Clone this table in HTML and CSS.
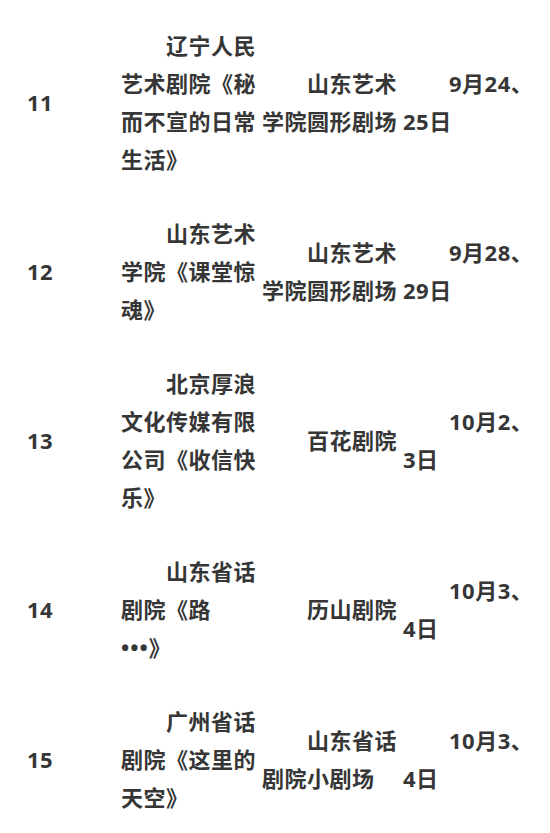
FILE: index.html
```html
<!DOCTYPE html>
<html lang="zh-CN">
<head>
<meta charset="utf-8">
<link rel="stylesheet" href="styles.css">
</head>
<body>
<table class="schedule">
  <tbody>
    <tr class="tall">
      <td class="num">11</td>
      <td class="title">辽宁人民<br>艺术剧院《秘<br>而不宣的日常<br>生活》</td>
      <td class="venue">山东艺术<br>学院圆形剧场</td>
      <td class="date">9月24、<br>25日</td>
    </tr>
    <tr class="short">
      <td class="num">12</td>
      <td class="title">山东艺术<br>学院《课堂惊<br>魂》</td>
      <td class="venue">山东艺术<br>学院圆形剧场</td>
      <td class="date">9月28、<br>29日</td>
    </tr>
    <tr class="tall">
      <td class="num">13</td>
      <td class="title">北京厚浪<br>文化传媒有限<br>公司《收信快<br>乐》</td>
      <td class="venue">百花剧院</td>
      <td class="date">10月2、<br>3日</td>
    </tr>
    <tr class="short">
      <td class="num">14</td>
      <td class="title">山东省话<br>剧院《路<br><span class="dots">•••</span>》</td>
      <td class="venue">历山剧院</td>
      <td class="date">10月3、<br>4日</td>
    </tr>
    <tr class="short">
      <td class="num">15</td>
      <td class="title">广州省话<br>剧院《这里的<br>天空》</td>
      <td class="venue">山东省话<br>剧院小剧场</td>
      <td class="date">10月3、<br>4日</td>
    </tr>
  </tbody>
</table>
</body>
</html>
```
FILE: styles.css
```css
html, body {
  margin: 0;
  padding: 0;
  background: #ffffff;
}

body {
  margin: 8px;
  font-family: "Open Sans", "Noto Sans CJK SC", sans-serif;
  font-weight: 700;
  font-size: 22px;
  line-height: 38px;
  color: #363636;
}

.schedule {
  border-collapse: collapse;
  table-layout: fixed;
  width: 520px;
}

.schedule tr.tall {
  height: 188px;
}

.schedule tr.short {
  height: 150px;
}

.schedule td {
  padding: 0;
  vertical-align: middle;
  white-space: nowrap;
  letter-spacing: 0.5px;
}

.schedule .num {
  width: 94px;
  padding-left: 19px;
}

.schedule .title {
  width: 141px;
  text-indent: 45px;
}

.schedule .venue {
  width: 141px;
  text-indent: 45px;
}

.schedule .date {
  text-indent: 46px;
}

.dots {
  letter-spacing: 1px;
}
```
